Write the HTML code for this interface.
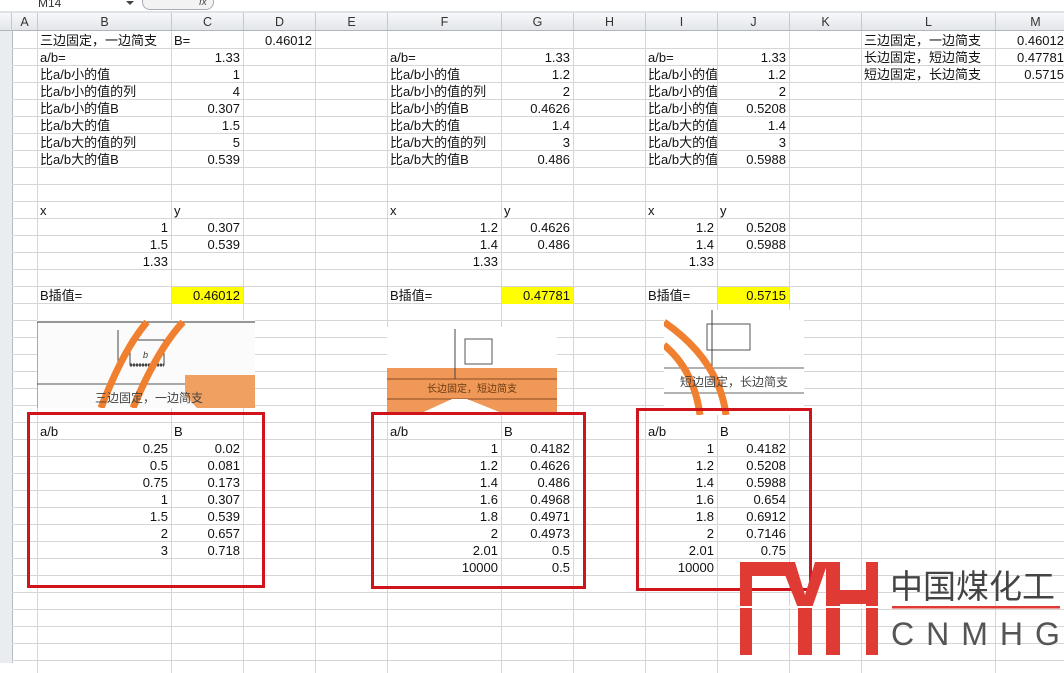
<!DOCTYPE html>
<html><head><meta charset="utf-8"><style>
html,body{margin:0;padding:0}
body{width:1064px;height:661px;position:relative;overflow:hidden;background:#fff;font-family:"Liberation Sans","Noto Sans CJK SC",sans-serif;font-size:13px;color:#111}
.g{position:absolute;left:12px;top:32px;width:1060px;height:640px;background-image:repeating-linear-gradient(to bottom,transparent 0,transparent 16px,#d6d6d6 16px,#d6d6d6 17px)}
.v{position:absolute;top:13px;width:1px;height:660px;background:#d6d6d6}
.h{position:absolute;top:13px;height:18px;line-height:18px;text-align:center;color:#333;font-size:12.5px;background:linear-gradient(#f7f8fa,#e3e6ea);border-right:1px solid #c5c9cf;border-bottom:1px solid #b0b5bb;box-sizing:border-box}
.c{position:absolute;height:17px;line-height:17px;white-space:nowrap;overflow:hidden}
.r{text-align:right;padding-right:3px;box-sizing:border-box}
.l{padding-left:3px;box-sizing:border-box}
.y{background:#ffff00}
.rb{position:absolute;border:3px solid #d0141c;box-sizing:border-box}
</style></head><body>
<div style="position:absolute;left:0;top:0;width:1064px;height:11px;background:#fff;border-bottom:1px solid #9aa3ad"></div>
<div style="position:absolute;left:38px;top:-4px;font-size:12px;color:#333">M14</div>
<div style="position:absolute;left:126px;top:1px;width:0;height:0;border-left:4px solid transparent;border-right:4px solid transparent;border-top:4px solid #444"></div>
<div style="position:absolute;left:142px;top:-6px;width:70px;height:14px;border:1px solid #aab;border-radius:8px;background:#f3f3f3"></div>
<div style="position:absolute;left:199px;top:-3px;font-size:10px;font-style:italic;color:#444">fx</div>
<div style="position:absolute;left:0;top:11px;width:1064px;height:2px;background:#dfe3e8"></div>
<div style="position:absolute;left:0;top:13px;width:12px;height:650px;background:#e9ecf0;border-right:1px solid #b8bcc2"></div>
<div class="g"></div>
<div class="v" style="left:37px"></div><div class="v" style="left:171px"></div><div class="v" style="left:243px"></div><div class="v" style="left:315px"></div><div class="v" style="left:387px"></div><div class="v" style="left:501px"></div><div class="v" style="left:573px"></div><div class="v" style="left:645px"></div><div class="v" style="left:717px"></div><div class="v" style="left:789px"></div><div class="v" style="left:861px"></div><div class="v" style="left:995px"></div>
<div class="h" style="left:0;width:12px"></div>
<div class="h" style="left:12px;width:26px">A</div><div class="h" style="left:38px;width:134px">B</div><div class="h" style="left:172px;width:72px">C</div><div class="h" style="left:244px;width:72px">D</div><div class="h" style="left:316px;width:72px">E</div><div class="h" style="left:388px;width:114px">F</div><div class="h" style="left:502px;width:72px">G</div><div class="h" style="left:574px;width:72px">H</div><div class="h" style="left:646px;width:72px">I</div><div class="h" style="left:718px;width:72px">J</div><div class="h" style="left:790px;width:72px">K</div><div class="h" style="left:862px;width:134px">L</div><div class="h" style="left:996px;width:80px">M</div>

<div class="c l" style="left:37px;top:32px;width:134px">三边固定，一边简支</div><div class="c l" style="left:171px;top:32px;width:72px">B=</div><div class="c r" style="left:243px;top:32px;width:72px">0.46012</div>
<div class="c l" style="left:37px;top:49px;width:134px">a/b=</div><div class="c r" style="left:171px;top:49px;width:72px">1.33</div>
<div class="c l" style="left:37px;top:66px;width:134px">比a/b小的值</div><div class="c r" style="left:171px;top:66px;width:72px">1</div>
<div class="c l" style="left:37px;top:83px;width:134px">比a/b小的值的列</div><div class="c r" style="left:171px;top:83px;width:72px">4</div>
<div class="c l" style="left:37px;top:100px;width:134px">比a/b小的值B</div><div class="c r" style="left:171px;top:100px;width:72px">0.307</div>
<div class="c l" style="left:37px;top:117px;width:134px">比a/b大的值</div><div class="c r" style="left:171px;top:117px;width:72px">1.5</div>
<div class="c l" style="left:37px;top:134px;width:134px">比a/b大的值的列</div><div class="c r" style="left:171px;top:134px;width:72px">5</div>
<div class="c l" style="left:37px;top:151px;width:134px">比a/b大的值B</div><div class="c r" style="left:171px;top:151px;width:72px">0.539</div>
<div class="c l" style="left:37px;top:202px;width:134px">x</div><div class="c l" style="left:171px;top:202px;width:72px">y</div>
<div class="c r" style="left:37px;top:219px;width:134px">1</div><div class="c r" style="left:171px;top:219px;width:72px">0.307</div>
<div class="c r" style="left:37px;top:236px;width:134px">1.5</div><div class="c r" style="left:171px;top:236px;width:72px">0.539</div>
<div class="c r" style="left:37px;top:253px;width:134px">1.33</div>
<div class="c l" style="left:37px;top:287px;width:134px">B插值=</div><div class="c r y" style="left:172px;top:287px;width:71px">0.46012</div>

<div class="c l" style="left:387px;top:49px;width:114px">a/b=</div><div class="c r" style="left:501px;top:49px;width:72px">1.33</div>
<div class="c l" style="left:387px;top:66px;width:114px">比a/b小的值</div><div class="c r" style="left:501px;top:66px;width:72px">1.2</div>
<div class="c l" style="left:387px;top:83px;width:114px">比a/b小的值的列</div><div class="c r" style="left:501px;top:83px;width:72px">2</div>
<div class="c l" style="left:387px;top:100px;width:114px">比a/b小的值B</div><div class="c r" style="left:501px;top:100px;width:72px">0.4626</div>
<div class="c l" style="left:387px;top:117px;width:114px">比a/b大的值</div><div class="c r" style="left:501px;top:117px;width:72px">1.4</div>
<div class="c l" style="left:387px;top:134px;width:114px">比a/b大的值的列</div><div class="c r" style="left:501px;top:134px;width:72px">3</div>
<div class="c l" style="left:387px;top:151px;width:114px">比a/b大的值B</div><div class="c r" style="left:501px;top:151px;width:72px">0.486</div>
<div class="c l" style="left:387px;top:202px;width:114px">x</div><div class="c l" style="left:501px;top:202px;width:72px">y</div>
<div class="c r" style="left:387px;top:219px;width:114px">1.2</div><div class="c r" style="left:501px;top:219px;width:72px">0.4626</div>
<div class="c r" style="left:387px;top:236px;width:114px">1.4</div><div class="c r" style="left:501px;top:236px;width:72px">0.486</div>
<div class="c r" style="left:387px;top:253px;width:114px">1.33</div>
<div class="c l" style="left:387px;top:287px;width:114px">B插值=</div><div class="c r y" style="left:502px;top:287px;width:71px">0.47781</div>

<div class="c l" style="left:645px;top:49px;width:72px">a/b=</div><div class="c r" style="left:717px;top:49px;width:72px">1.33</div>
<div class="c l" style="left:645px;top:66px;width:72px">比a/b小的值</div><div class="c r" style="left:717px;top:66px;width:72px">1.2</div>
<div class="c l" style="left:645px;top:83px;width:72px">比a/b小的值的列</div><div class="c r" style="left:717px;top:83px;width:72px">2</div>
<div class="c l" style="left:645px;top:100px;width:72px">比a/b小的值B</div><div class="c r" style="left:717px;top:100px;width:72px">0.5208</div>
<div class="c l" style="left:645px;top:117px;width:72px">比a/b大的值</div><div class="c r" style="left:717px;top:117px;width:72px">1.4</div>
<div class="c l" style="left:645px;top:134px;width:72px">比a/b大的值的列</div><div class="c r" style="left:717px;top:134px;width:72px">3</div>
<div class="c l" style="left:645px;top:151px;width:72px">比a/b大的值B</div><div class="c r" style="left:717px;top:151px;width:72px">0.5988</div>
<div class="c l" style="left:645px;top:202px;width:72px">x</div><div class="c l" style="left:717px;top:202px;width:72px">y</div>
<div class="c r" style="left:645px;top:219px;width:72px">1.2</div><div class="c r" style="left:717px;top:219px;width:72px">0.5208</div>
<div class="c r" style="left:645px;top:236px;width:72px">1.4</div><div class="c r" style="left:717px;top:236px;width:72px">0.5988</div>
<div class="c r" style="left:645px;top:253px;width:72px">1.33</div>
<div class="c l" style="left:645px;top:287px;width:72px">B插值=</div><div class="c r y" style="left:718px;top:287px;width:71px">0.5715</div>

<div class="c l" style="left:861px;top:32px;width:134px">三边固定，一边简支</div><div class="c r" style="left:995px;top:32px;width:72px">0.46012</div>
<div class="c l" style="left:861px;top:49px;width:134px">长边固定，短边简支</div><div class="c r" style="left:995px;top:49px;width:72px">0.47781</div>
<div class="c l" style="left:861px;top:66px;width:134px">短边固定，长边简支</div><div class="c r" style="left:995px;top:66px;width:72px">0.5715</div>

<svg style="position:absolute;left:37px;top:320px" width="218" height="88" viewBox="0 0 218 88">
<rect width="218" height="88" fill="#fbfbfb"/>
<line x1="0" y1="2" x2="218" y2="2" stroke="#333"/>
<line x1="0" y1="64" x2="218" y2="64" stroke="#555"/>
<line x1="0" y1="2" x2="0" y2="88" stroke="#555"/>
<polygon points="148,55 218,55 218,88 160,88 148,75" fill="#f0a060"/>
<rect x="93" y="20" width="34" height="25" fill="none" stroke="#444"/>
<path d="M93 45 H127" stroke="#444" stroke-dasharray="2 1" stroke-width="3"/>
<text x="106" y="38" font-size="9" font-style="italic" fill="#333">b</text>
<line x1="81" y1="10" x2="81" y2="55" stroke="#444"/>
<path d="M64 88 Q86 30 110 2" stroke="#f08030" stroke-width="7" fill="none"/>
<path d="M96 88 Q120 30 146 2" stroke="#f08030" stroke-width="7" fill="none"/>
<text x="58" y="82" font-size="12" fill="#444" font-family="Noto Sans CJK SC">三边固定，一边简支</text>
</svg>
<svg style="position:absolute;left:387px;top:327px" width="170" height="88" viewBox="0 0 170 88">
<rect width="170" height="88" fill="#fff"/>
<rect x="0" y="41" width="170" height="47" fill="#f09858"/>
<line x1="0" y1="52" x2="170" y2="52" stroke="#8a4a20"/>
<line x1="0" y1="72" x2="170" y2="72" stroke="#8a4a20"/>
<polygon points="30,88 65,72 80,72 120,88" fill="#fff"/>
<rect x="78" y="12" width="27" height="25" fill="#fff" stroke="#555"/>
<line x1="68" y1="2" x2="68" y2="52" stroke="#444"/>
<text x="40" y="65" font-size="10" fill="#6a3a10" font-family="Noto Sans CJK SC">长边固定，短边简支</text>
</svg>
<svg style="position:absolute;left:664px;top:310px" width="140" height="105" viewBox="0 0 140 105">
<rect width="140" height="105" fill="#fff"/>
<rect x="43" y="14" width="43" height="26" fill="none" stroke="#555"/>
<line x1="48" y1="0" x2="48" y2="58" stroke="#444"/>
<line x1="0" y1="58" x2="140" y2="58" stroke="#666"/>
<line x1="0" y1="83" x2="140" y2="83" stroke="#666"/>
<path d="M0 12 Q55 50 62 105" stroke="#f08030" stroke-width="7" fill="none"/>
<path d="M0 35 Q30 60 36 105" stroke="#f08030" stroke-width="7" fill="none"/>
<text x="16" y="76" font-size="12" fill="#444" font-family="Noto Sans CJK SC">短边固定，长边简支</text>
</svg>

<div class="rb" style="left:27px;top:412px;width:238px;height:176px"></div>
<div class="rb" style="left:371px;top:412px;width:215px;height:177px"></div>
<div class="rb" style="left:636px;top:408px;width:176px;height:183px"></div>

<div class="c l" style="left:37px;top:423px;width:134px">a/b</div><div class="c l" style="left:171px;top:423px;width:72px">B</div>
<div class="c r" style="left:37px;top:440px;width:134px">0.25</div><div class="c r" style="left:171px;top:440px;width:72px">0.02</div>
<div class="c r" style="left:37px;top:457px;width:134px">0.5</div><div class="c r" style="left:171px;top:457px;width:72px">0.081</div>
<div class="c r" style="left:37px;top:474px;width:134px">0.75</div><div class="c r" style="left:171px;top:474px;width:72px">0.173</div>
<div class="c r" style="left:37px;top:491px;width:134px">1</div><div class="c r" style="left:171px;top:491px;width:72px">0.307</div>
<div class="c r" style="left:37px;top:508px;width:134px">1.5</div><div class="c r" style="left:171px;top:508px;width:72px">0.539</div>
<div class="c r" style="left:37px;top:525px;width:134px">2</div><div class="c r" style="left:171px;top:525px;width:72px">0.657</div>
<div class="c r" style="left:37px;top:542px;width:134px">3</div><div class="c r" style="left:171px;top:542px;width:72px">0.718</div>

<div class="c l" style="left:387px;top:423px;width:114px">a/b</div><div class="c l" style="left:501px;top:423px;width:72px">B</div>
<div class="c r" style="left:387px;top:440px;width:114px">1</div><div class="c r" style="left:501px;top:440px;width:72px">0.4182</div>
<div class="c r" style="left:387px;top:457px;width:114px">1.2</div><div class="c r" style="left:501px;top:457px;width:72px">0.4626</div>
<div class="c r" style="left:387px;top:474px;width:114px">1.4</div><div class="c r" style="left:501px;top:474px;width:72px">0.486</div>
<div class="c r" style="left:387px;top:491px;width:114px">1.6</div><div class="c r" style="left:501px;top:491px;width:72px">0.4968</div>
<div class="c r" style="left:387px;top:508px;width:114px">1.8</div><div class="c r" style="left:501px;top:508px;width:72px">0.4971</div>
<div class="c r" style="left:387px;top:525px;width:114px">2</div><div class="c r" style="left:501px;top:525px;width:72px">0.4973</div>
<div class="c r" style="left:387px;top:542px;width:114px">2.01</div><div class="c r" style="left:501px;top:542px;width:72px">0.5</div>
<div class="c r" style="left:387px;top:559px;width:114px">10000</div><div class="c r" style="left:501px;top:559px;width:72px">0.5</div>

<div class="c l" style="left:645px;top:423px;width:72px">a/b</div><div class="c l" style="left:717px;top:423px;width:72px">B</div>
<div class="c r" style="left:645px;top:440px;width:72px">1</div><div class="c r" style="left:717px;top:440px;width:72px">0.4182</div>
<div class="c r" style="left:645px;top:457px;width:72px">1.2</div><div class="c r" style="left:717px;top:457px;width:72px">0.5208</div>
<div class="c r" style="left:645px;top:474px;width:72px">1.4</div><div class="c r" style="left:717px;top:474px;width:72px">0.5988</div>
<div class="c r" style="left:645px;top:491px;width:72px">1.6</div><div class="c r" style="left:717px;top:491px;width:72px">0.654</div>
<div class="c r" style="left:645px;top:508px;width:72px">1.8</div><div class="c r" style="left:717px;top:508px;width:72px">0.6912</div>
<div class="c r" style="left:645px;top:525px;width:72px">2</div><div class="c r" style="left:717px;top:525px;width:72px">0.7146</div>
<div class="c r" style="left:645px;top:542px;width:72px">2.01</div><div class="c r" style="left:717px;top:542px;width:72px">0.75</div>
<div class="c r" style="left:645px;top:559px;width:72px">10000</div>

<svg style="position:absolute;left:738px;top:560px" width="326" height="101" viewBox="738 560 326 101">
<g fill="#e03a35">
<rect x="740" y="562" width="12" height="93"/>
<rect x="740" y="562" width="50" height="14"/>
<polygon points="780,562 795,562 805,595 815,562 828,562 812,608 798,608"/>
<rect x="798" y="598" width="14" height="57"/>
<rect x="826" y="562" width="14" height="93"/>
<rect x="866" y="562" width="12" height="93"/>
<rect x="826" y="590" width="52" height="14"/>
</g>
<rect x="738" y="606" width="142" height="2" fill="#fff"/>
<rect x="892" y="606" width="168" height="2.5" fill="#e03a35"/>
<text x="890" y="598" font-size="33" fill="#444" font-family="Noto Sans CJK SC">中国煤化工</text>
<text x="891" y="645" font-size="32" fill="#555" letter-spacing="12" font-family="Liberation Sans">CNMHG</text>
</svg>
</body></html>
